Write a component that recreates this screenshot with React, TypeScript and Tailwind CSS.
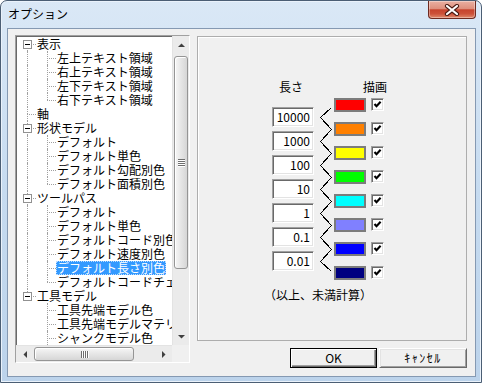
import clsx from "clsx";

type Item = {
  label: string;
  level: 0 | 1;
  box?: boolean;
  first?: boolean;
  lastRoot?: boolean;
  last?: boolean;
  underLastRoot?: boolean;
  selected?: boolean;
};

const items: Item[] = [
  { label: "表示", level: 0, box: true, first: true },
  { label: "左上テキスト領域", level: 1 },
  { label: "右上テキスト領域", level: 1 },
  { label: "左下テキスト領域", level: 1 },
  { label: "右下テキスト領域", level: 1, last: true },
  { label: "軸", level: 0 },
  { label: "形状モデル", level: 0, box: true },
  { label: "デフォルト", level: 1 },
  { label: "デフォルト単色", level: 1 },
  { label: "デフォルト勾配別色", level: 1 },
  { label: "デフォルト面積別色", level: 1, last: true },
  { label: "ツールパス", level: 0, box: true },
  { label: "デフォルト", level: 1 },
  { label: "デフォルト単色", level: 1 },
  { label: "デフォルトコード別色", level: 1 },
  { label: "デフォルト速度別色", level: 1 },
  { label: "デフォルト長さ別色", level: 1, selected: true },
  { label: "デフォルトコードチェック", level: 1, last: true },
  { label: "工具モデル", level: 0, box: true, lastRoot: true },
  { label: "工具先端モデル色", level: 1, underLastRoot: true },
  { label: "工具先端モデルマテリアル", level: 1, underLastRoot: true },
  { label: "シャンクモデル色", level: 1, underLastRoot: true },
];

const lengths = ["10000", "1000", "100", "10", "1", "0.1", "0.01"];
const swatches = ["#ff0000", "#ff8000", "#ffff00", "#00ff00", "#00ffff", "#8080ff", "#0000ff", "#000080"];

// classic 3D edges
const sunken =
  "border border-t-[#a0a0a0] border-l-[#a0a0a0] border-r-white border-b-white shadow-[inset_1px_1px_0_#696969,inset_-1px_-1px_0_#e3e3e3]";

function Dots({ className }: { className: string }) {
  return <span className={clsx("absolute border-dotted border-[#a0a0a0]", className)} />;
}

function TreeRow({ item }: { item: Item }) {
  const root = item.level === 0;
  return (
    <div className="flex h-[14px] items-stretch whitespace-nowrap">
      <div className="relative w-[20px] shrink-0">
        {root ? (
          <>
            {!item.first && <Dots className="left-[11px] top-0 h-[7px] border-l" />}
            {!item.lastRoot && <Dots className="left-[11px] top-[7px] h-[7px] border-l" />}
            <Dots className="left-[11px] top-[7px] w-[9px] border-t" />
            {item.box && (
              <span className="absolute left-[7px] top-[3px] h-[9px] w-[9px] border border-[#919191] bg-white">
                <span className="absolute left-[1px] top-[3px] h-px w-[5px] bg-black" />
              </span>
            )}
          </>
        ) : (
          !item.underLastRoot && <Dots className="left-[11px] top-0 h-[14px] border-l" />
        )}
      </div>
      {!root && (
        <div className="relative w-[20px] shrink-0">
          <Dots className={clsx("left-[11px] top-0 border-l", item.last ? "h-[7px]" : "h-[14px]")} />
          <Dots className="left-[11px] top-[7px] w-[9px] border-t" />
        </div>
      )}
      <span
        className={clsx(
          "px-[1px] leading-[14px]",
          item.selected && "bg-[#3399ff] text-white outline-1 -outline-offset-1 outline-dotted outline-[#bcdcff]"
        )}
      >
        {item.label}
      </span>
    </div>
  );
}

function Arrow({ dir }: { dir: "up" | "down" | "left" | "right" }) {
  const vertical = dir === "up" || dir === "down";
  const pts = {
    up: "0,4 7,4 3.5,0.5",
    down: "0,0 7,0 3.5,3.5",
    left: "4,0 4,7 0.5,3.5",
    right: "0,0 0,7 3.5,3.5",
  }[dir];
  return (
    <svg width={vertical ? 7 : 4} height={vertical ? 4 : 7} viewBox={vertical ? "0 0 7 4" : "0 0 4 7"}>
      <polygon points={pts} fill="#3f3f3f" />
    </svg>
  );
}

function VScroll() {
  return (
    <div className="flex w-[17px] shrink-0 flex-col border-l border-[#e3e3e3] bg-[#ebebeb]">
      <div className="flex h-[17px] items-center justify-center">
        <Arrow dir="up" />
      </div>
      <div className="h-[3px]" />
      <div className="mx-[1px] flex h-[213px] items-center justify-center rounded-[3px] border border-[#959595] bg-gradient-to-r from-[#f6f6f6] to-[#d6d6d6] shadow-[inset_1px_1px_0_#fff]">
        <div className="flex flex-col gap-[1px]">
          {[0, 1, 2, 3].map((i) => (
            <span key={i} className="h-px w-[7px] bg-[#6f6f6f] shadow-[0_1px_0_#fff]" />
          ))}
        </div>
      </div>
      <div className="flex-1" />
      <div className="flex h-[17px] items-center justify-center">
        <Arrow dir="down" />
      </div>
    </div>
  );
}

function HScroll() {
  return (
    <div className="flex h-[17px] shrink-0">
      <div className="flex flex-1 border-t border-[#e3e3e3] bg-[#ebebeb]">
        <div className="flex w-[17px] items-center justify-center">
          <Arrow dir="left" />
        </div>
        <div className="w-[1px]" />
        <div className="my-[1px] flex w-[100px] items-center justify-center rounded-[3px] border border-[#959595] bg-gradient-to-b from-[#f6f6f6] to-[#d6d6d6] shadow-[inset_1px_1px_0_#fff]">
          <div className="flex gap-[1px]">
            {[0, 1, 2, 3].map((i) => (
              <span key={i} className="h-[7px] w-px bg-[#6f6f6f] shadow-[1px_0_0_#fff]" />
            ))}
          </div>
        </div>
        <div className="flex-1" />
        <div className="flex w-[17px] items-center justify-center">
          <Arrow dir="right" />
        </div>
      </div>
      <div className="w-[17px] bg-[#f0f0f0]" />
    </div>
  );
}

function Tree() {
  return (
    <div className={clsx("flex h-[328px] w-[175px] shrink-0 flex-col bg-white", sunken)}>
      <div className="flex min-h-0 flex-1">
        <div className="min-w-0 flex-1 overflow-hidden pt-px">
          {items.map((item, i) => (
            <TreeRow key={i} item={item} />
          ))}
        </div>
        <VScroll />
      </div>
      <HScroll />
    </div>
  );
}

function Check() {
  return (
    <div className={clsx("flex h-[13px] w-[13px] items-center justify-center bg-white", sunken)}>
      <svg width="9" height="9" viewBox="0 0 9 9">
        <polyline points="1.5,4 3.5,6.2 7.6,1.8" fill="none" stroke="#000" strokeWidth="2.1" />
      </svg>
    </div>
  );
}

function Zigzag() {
  const pts: string[] = ["17.5,9.5"];
  for (let k = 0; k < 7; k++) {
    pts.push(`6.5,${19.5 + k * 24}`);
    pts.push(k === 6 ? "17.5,173.5" : `17.5,${31.5 + k * 24}`);
  }
  return (
    <svg width="20" height="182" viewBox="0 0 20 182" className="shrink-0" shapeRendering="crispEdges">
      <polyline points={pts.join(" ")} fill="none" stroke="#000" strokeWidth="1" />
    </svg>
  );
}

function LengthPanel() {
  return (
    <div className="flex h-[305px] flex-col border border-[#adadad] shadow-[inset_1px_1px_0_#fff]">
      <div className="ml-[81px] mt-[43px] flex leading-[14px]">
        <span>長さ</span>
        <span className="ml-[60px]">描画</span>
      </div>
      <div className="ml-[74px] mt-[4px] flex items-start">
        <div className="mt-[9px] flex w-[42px] flex-col gap-[4px]">
          {lengths.map((v) => (
            <div key={v} className={clsx("h-[20px] bg-white pr-[3px] text-right leading-[18px]", sunken)}>
              {v}
            </div>
          ))}
        </div>
        <Zigzag />
        <div className="flex flex-col gap-[10px]">
          {swatches.map((c) => (
            <div key={c} className="flex items-start gap-[5px]">
              <div className="h-[14px] w-[32px] border-2 border-[#7c7c7c]" style={{ backgroundColor: c }} />
              <Check />
            </div>
          ))}
        </div>
      </div>
      <div className="ml-[66px] mt-[8px] leading-[14px]">（以上、未満計算）</div>
    </div>
  );
}

function CloseButton() {
  return (
    <div className="relative flex h-[18px] w-[48px] items-center justify-center rounded-b-[4px] border border-t-0 border-[#6e2a20] bg-[linear-gradient(to_bottom,#eab0a2_0%,#de8f7d_45%,#c7432d_52%,#cc5139_75%,#e08a6c_100%)] shadow-[inset_0_0_0_1px_rgba(255,255,255,0.35)]">
      <svg width="16" height="12" viewBox="0 0 16 12">
        <path d="M3 2 L13 10 M13 2 L3 10" stroke="#4a1a12" strokeWidth="4.2" strokeLinecap="round" />
        <path d="M3 2 L13 10 M13 2 L3 10" stroke="#fff" strokeWidth="2.2" strokeLinecap="round" />
      </svg>
    </div>
  );
}

function Button({ label, primary }: { label: string; primary?: boolean }) {
  return (
    <button
      className={clsx(
        "flex h-[20px] items-center justify-center bg-[#f0f0f0] leading-[14px]",
        primary
          ? "w-[87px] border border-black shadow-[inset_1px_1px_0_#fff,inset_-1px_-1px_0_#696969,inset_-2px_-2px_0_#a0a0a0]"
          : "w-[88px] border border-t-white border-l-white border-r-[#696969] border-b-[#696969] tracking-[1.5px] shadow-[inset_1px_1px_0_#e3e3e3,inset_-1px_-1px_0_#a0a0a0]"
      )}
    >
      {label}
    </button>
  );
}

export default function App() {
  return (
    <div className="h-[383px] w-[482px] font-['Noto_Sans_CJK_JP','Noto_Sans',sans-serif] text-[12px] text-black">
      <div className="flex h-full flex-col rounded-t-[7px] border border-[#4b5e74] bg-gradient-to-b from-[#dae8f6] via-[#c6dbf0] to-[#bcd3eb] shadow-[inset_0_0_0_1px_#eaf2fb]">
        <div className="flex h-[27px] shrink-0 items-start justify-between pl-[7px] pr-[5px]">
          <span className="mt-[5px] leading-[16px]">オプション</span>
          <CloseButton />
        </div>
        <div className="mb-[5px] ml-[6px] mr-[5px] flex flex-1 border border-[#8599b2] bg-[#f0f0f0] pl-[7px] pt-[6px]">
          <Tree />
          <div className="ml-[7px] mt-[1px] flex w-[270px] flex-col gap-[7px]">
            <LengthPanel />
            <div className="flex justify-end gap-[2px]">
              <Button label="OK" primary />
              <Button label="ｷｬﾝｾﾙ" />
            </div>
          </div>
        </div>
      </div>
    </div>
  );
}
